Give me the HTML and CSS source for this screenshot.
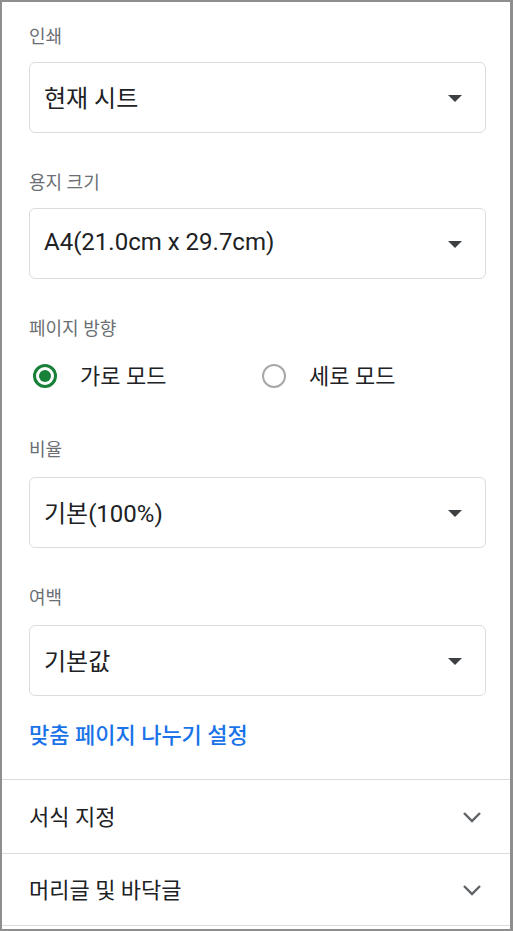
FILE: index.html
```html
<!DOCTYPE html>
<html lang="ko">
<head>
<meta charset="utf-8">
<link rel="stylesheet" href="styles.css">
</head>
<body>
<div class="panel">
  <div class="body">
    <div class="label first">인쇄</div>
    <div class="select"><span>현재 시트</span><span class="caret"></span></div>

    <div class="label">용지 크기</div>
    <div class="select"><span>A4(21.0cm x 29.7cm)</span><span class="caret"></span></div>

    <div class="label">페이지 방향</div>
    <div class="radios">
      <div class="radio-item first-radio"><span class="radio on"></span><span class="radio-text">가로 모드</span></div>
      <div class="radio-item"><span class="radio"></span><span class="radio-text">세로 모드</span></div>
    </div>

    <div class="label after-radio">비율</div>
    <div class="select lower"><span>기본(100%)</span><span class="caret"></span></div>

    <div class="label">여백</div>
    <div class="select lower"><span>기본값</span><span class="caret"></span></div>

    <div class="link">맞춤 페이지 나누기 설정</div>
  </div>
  <div class="row"><span class="row-text">서식 지정</span>
    <svg class="chev" width="20" height="12" viewBox="0 0 20 12"><path d="M2 2 L10 10 L18 2" fill="none" stroke="#5f6368" stroke-width="2.4"/></svg>
  </div>
  <div class="row last"><span class="row-text">머리글 및 바닥글</span>
    <svg class="chev" width="20" height="12" viewBox="0 0 20 12"><path d="M2 2 L10 10 L18 2" fill="none" stroke="#5f6368" stroke-width="2.4"/></svg>
  </div>
</div>
</body>
</html>
```

FILE: styles.css
```css
html, body {
  margin: 0;
  padding: 0;
  background: #fff;
}
body {
  font-family: Roboto, "Noto Sans CJK KR", sans-serif;
  color: #202124;
}
.panel {
  width: 513px;
  height: 931px;
  box-sizing: border-box;
  border: 2px solid #8e8e8e;
  border-right-width: 3px;
  display: flex;
  flex-direction: column;
}
.body {
  padding: 0 24px 0 27px;
  display: flex;
  flex-direction: column;
  height: 777px;
  box-sizing: border-box;
  flex: none;
}
.label {
  font-size: 18px;
  line-height: 24px;
  color: #6b6f74;
  margin-top: 38px;
}
.label.first {
  margin-top: 23px;
}
.label.after-radio {
  margin-top: 42px;
}
.select {
  margin-top: 13px;
  height: 71px;
  box-sizing: border-box;
  border: 1px solid #dadce0;
  border-radius: 6px;
  display: flex;
  align-items: center;
  justify-content: space-between;
  padding: 0 23px 3px 14px;
  font-size: 24px;
  color: #202124;
}
.select.lower {
  margin-top: 15px;
}
.caret {
  width: 0;
  height: 0;
  border-left: 7px solid transparent;
  border-right: 7px solid transparent;
  border-top: 7px solid #3c4043;
  margin-top: 4px;
}
.radios {
  display: flex;
  align-items: center;
  height: 40px;
  margin-top: 15px;
  padding-left: 4px;
}
.radio-item {
  display: flex;
  align-items: center;
}
.radio-item.first-radio {
  width: 229px;
}
.radio {
  width: 24px;
  height: 24px;
  box-sizing: border-box;
  border-radius: 50%;
  border: 2px solid #a8a8a8;
  position: relative;
  flex: none;
}
.radio.on {
  border: 3px solid #188038;
}
.radio.on::after {
  content: "";
  position: absolute;
  left: 3px;
  top: 3px;
  width: 12px;
  height: 12px;
  border-radius: 50%;
  background: #188038;
}
.radio-text {
  font-size: 22px;
  margin-left: 23px;
  padding-bottom: 4px;
  color: #202124;
}
.link {
  margin-top: 26px;
  font-size: 22px;
  line-height: 28px;
  color: #1a73e8;
  font-weight: 500;
}
.row {
  border-top: 1px solid #dadce0;
  height: 74px;
  box-sizing: border-box;
  display: flex;
  align-items: center;
  justify-content: space-between;
  padding: 0 28px 0 27px;
  font-size: 22px;
  color: #202124;
  flex: none;
}
.row-text {
  padding-bottom: 4px;
}
.row.last {
  border-bottom: 1px solid #dadce0;
  height: 73px;
}
```
